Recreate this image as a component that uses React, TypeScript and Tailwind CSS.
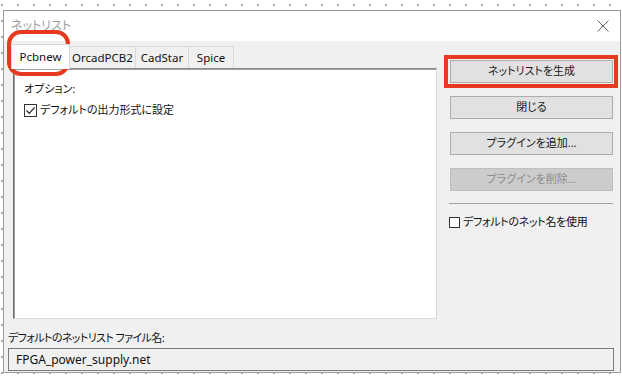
const FONT = { fontFamily: '"Noto Sans", "Noto Sans CJK JP", sans-serif' };

function Check({ checked }: { checked?: boolean }) {
  return (
    <span className="inline-flex h-[13px] w-[13px] shrink-0 items-center justify-center border border-[#333] bg-white">
      {checked && (
        <svg width="11" height="11" viewBox="0 0 11 11">
          <path d="M1.5 5.5 L4.3 8.3 L9.6 2.3" fill="none" stroke="#222" strokeWidth="1.2" />
        </svg>
      )}
    </span>
  );
}

function Btn({ label, disabled }: { label: string; disabled?: boolean }) {
  return (
    <div
      className={`flex h-[23px] w-[163px] items-center justify-center border text-[11px] ${
        disabled ? 'border-[#bfbfbf] bg-[#cccccc] text-[#8d8d8d]' : 'border-[#adadad] bg-[#e1e1e1] text-[#1a1a1a]'
      }`}
    >
      {label}
    </div>
  );
}

export default function App() {
  const tabs = [
    { t: 'OrcadPCB2', w: 'w-[67px]' },
    { t: 'CadStar', w: 'w-[54px]' },
    { t: 'Spice', w: 'w-[46px]' },
  ];
  return (
    <div
      className="relative h-[377px] w-[622px] overflow-hidden bg-white bg-[radial-gradient(circle,#a8a8a8_0.8px,transparent_1px)] bg-[length:16px_16px] bg-[position:-6px_-3px] [font-feature-settings:'palt']"
      style={FONT}
    >
      <div className="ml-[3px] mt-[10px] flex h-[363px] w-[618px] flex-col border border-[#9b9b9b] bg-[#f0f0f0]">
        {/* title bar */}
        <div className="flex h-[30px] items-center justify-between bg-white pl-[7px] pr-[11px]">
          <span className="text-[12px] text-[#a0a0a0]">ネットリスト</span>
          <svg width="12" height="12" viewBox="0 0 12 12">
            <path d="M0.5 0.5 L11.5 11.5 M11.5 0.5 L0.5 11.5" stroke="#666" strokeWidth="1" />
          </svg>
        </div>

        <div className="flex pl-[9px] pt-[3px]">
          {/* tabs + panel */}
          <div className="flex w-[424px] flex-col">
            <div className="flex h-[24px] items-end whitespace-nowrap text-[11.5px] text-[#111]">
              <div className="relative z-10 -mb-px -ml-[2px] flex h-[25px] w-[59px] shrink-0 items-center justify-center border border-b-0 border-[#d9d9d9] bg-white">
                Pcbnew
              </div>
              {tabs.map((x) => (
                <div
                  key={x.t}
                  className={`-ml-px flex h-[22px] shrink-0 items-center justify-center border border-b-0 border-[#d9d9d9] bg-[#f0f0f0] ${x.w}`}
                >
                  {x.t}
                </div>
              ))}
            </div>
            <div className="h-[251px] border border-[#d9d9d9] border-l-[#6a6a6a] border-t-[#8a8a8a] bg-white pl-[10px] pt-[12px] text-[11px] text-[#111] shadow-[inset_1px_1px_0_#a0a0a0]">
              <div className="h-[16px] leading-[16px]">オプション:</div>
              <div className="mt-[5px] flex items-center gap-[3px] leading-[16px]">
                <Check checked />
                <span>デフォルトの出力形式に設定</span>
              </div>
            </div>
          </div>

          {/* right buttons */}
          <div className="ml-[13px] flex flex-col pt-[16px]">
            <Btn label="ネットリストを生成" />
            <div className="mt-[13px]"><Btn label="閉じる" /></div>
            <div className="mt-[13px]"><Btn label="プラグインを追加..." /></div>
            <div className="mt-[13px]"><Btn label="プラグインを削除..." disabled /></div>
            <div className="-ml-px mt-[12px] h-px w-[164px] bg-[#a0a0a0]" />
            <div className="-ml-[1px] mt-[10px] flex items-center gap-[3px] text-[11px] tracking-[-0.3px] text-[#111]">
              <span className="inline-block h-[11px] w-[11px] border border-[#333] bg-white" />
              <span>デフォルトのネット名を使用</span>
            </div>
          </div>
        </div>

        {/* bottom */}
        <div className="px-[4px] pt-[11px]">
          <div className="text-[11px] leading-[16px] tracking-[-0.6px] text-[#111]">デフォルトのネットリスト ファイル名:</div>
          <div className="mt-[2px] flex h-[23px] w-[606px] items-center border border-[#7a7a7a] bg-[#f0f0f0] pl-[7px] text-[12px] text-[#111]">
            FPGA_power_supply.net
          </div>
        </div>
      </div>

      {/* annotations */}
      <div className="absolute left-[7px] top-[30px] h-[46px] w-[63px] rounded-[14px] border-[4px] border-[#e53a1f]" />
      <div className="absolute left-[444px] top-[55px] h-[33px] w-[174px] border-[4px] border-[#e53a1f]" />
    </div>
  );
}
